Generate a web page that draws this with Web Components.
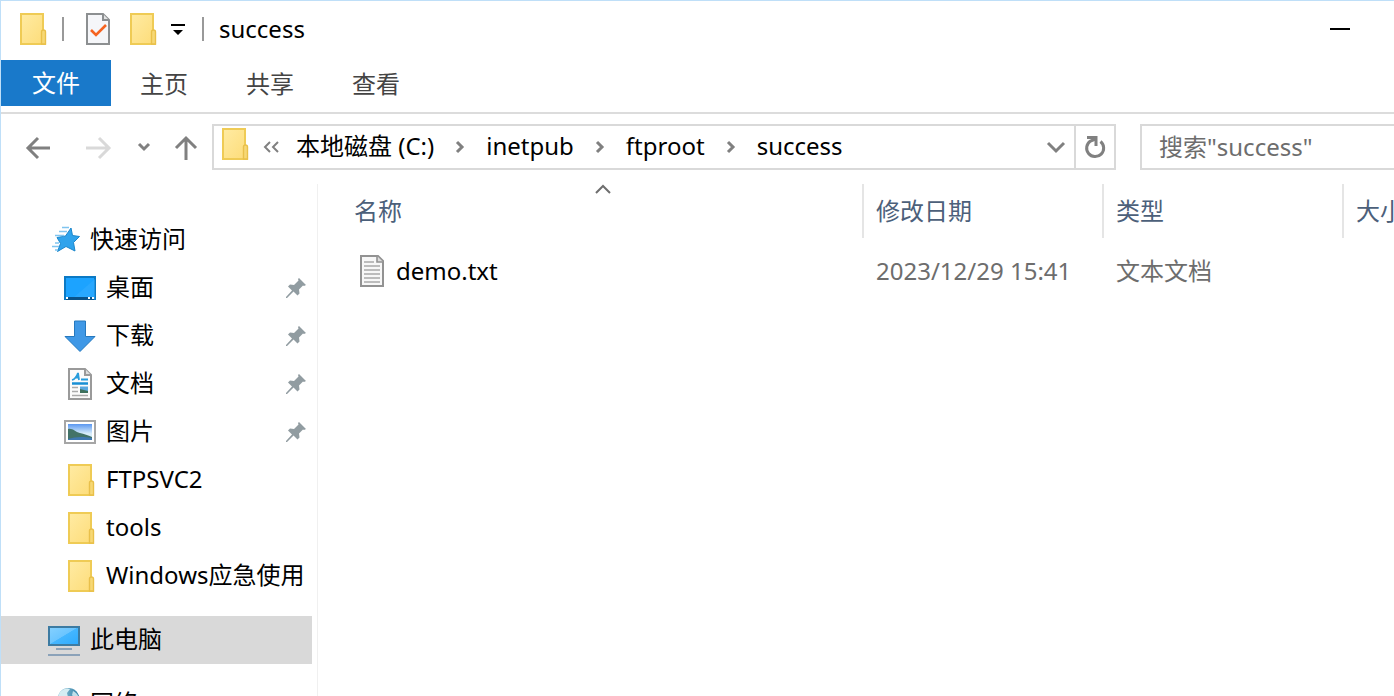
<!DOCTYPE html>
<html lang="zh-CN">
<head>
<meta charset="UTF-8">
<meta name="viewport" content="width=device-width, initial-scale=1.0">
<title>success</title>
<style>
    html, body {
        height: 100%;
        margin: 0;
    }
    body {
        overflow: hidden;
        background: #fff;
        color: #000;
        font: 24px/32px "Noto Sans", "Noto Sans CJK SC", sans-serif;
    }
</style>
</head>
<body>
<explorer-window>
    <title-bar slot="title">success</title-bar>
    <ribbon-tabs slot="ribbon">
        <ribbon-tab primary>文件</ribbon-tab>
        <ribbon-tab>主页</ribbon-tab>
        <ribbon-tab>共享</ribbon-tab>
        <ribbon-tab>查看</ribbon-tab>
    </ribbon-tabs>
    <nav-buttons slot="address"></nav-buttons>
    <address-bar slot="address">
        <path-crumb>本地磁盘 (C:)</path-crumb>
        <path-crumb>inetpub</path-crumb>
        <path-crumb>ftproot</path-crumb>
        <path-crumb>success</path-crumb>
    </address-bar>
    <search-box slot="address" folder="success"></search-box>
    <nav-tree slot="side">
        <tree-group>
            <tree-item icon="star" root>快速访问</tree-item>
            <tree-item icon="desktop" pinned>桌面</tree-item>
            <tree-item icon="download" pinned>下载</tree-item>
            <tree-item icon="document" pinned>文档</tree-item>
            <tree-item icon="picture" pinned>图片</tree-item>
            <tree-item icon="folder">FTPSVC2</tree-item>
            <tree-item icon="folder">tools</tree-item>
            <tree-item icon="folder">Windows应急使用</tree-item>
        </tree-group>
        <tree-group>
            <tree-item icon="computer" root selected>此电脑</tree-item>
        </tree-group>
        <tree-group>
            <tree-item icon="network" root>网络</tree-item>
        </tree-group>
    </nav-tree>
    <file-list></file-list>
</explorer-window>

<script>
/* Item icons, all drawn on a 32 x 32 grid */
const ICONS = {
    folder: `<defs><linearGradient id="f" x2="1" y2="1"><stop stop-color="#ffeba3"/><stop offset="1" stop-color="#fddc78"/></linearGradient></defs>
        <path d="M5 1h22v17l2 1v12H5z" fill="url(#f)" stroke="#efcb55" stroke-width="2"/>
        <path d="M25.500 31V19q0-2 2-2t2 2v12z" fill="#f7d875" stroke="#e9c04a" stroke-width="1.400"/>`,
    check: `<path d="M5 1h16l6 6v24H5z" fill="#f5f6f9" stroke="#8c8f91" stroke-width="2"/>
        <path d="M21 1v6h6" fill="#e2e3e4" stroke="#8c8f91" stroke-width="2"/>
        <path d="m9 17 5 5 10-10" fill="none" stroke="#f56320" stroke-width="2.600"/>`,
    star: `<path d="M23 4l1.500 7.500 7 1-6 6 1.500 8.500-9-4.500-8.500 5 3-8-3.500-6 8.500-1.500z" fill="#2fa3ec" stroke="#1a86cb"/>
        <path d="M14 3.500h7M11 7.500h8M7 11.500h9M7 19h4M4 22.500h7M7 26h3" stroke="#7fc4ef" stroke-width="1.500"/>`,
    desktop: `<path d="M1 5h30v22H1z" fill="#1ca3ff" stroke="#0b79c4" stroke-width="2"/>
        <path d="M9 26 31 7v20z" fill="#36adff" opacity=".5"/><path d="M2 25h28v3H2z" fill="#09538b"/>
        <path d="M2 26h2M24 26h2M28 26h2" stroke="#fff" stroke-width="2"/>`,
    download: `<path d="M10.500 1h11v15.500H31L16 31.500 1 16.500h9.500z" fill="#3f98e6" stroke="#2578be"/>`,
    document: `<path d="M5 1h16l6 6v24H5z" fill="#fbfbfb" stroke="#9a9a9a" stroke-width="2"/>
        <path d="M21 1v6h6" fill="#ddd" stroke="#9a9a9a" stroke-width="2"/>
        <path d="M8 12q4-1 6-7l1 7M11 9.500h4M17 11.500h7" fill="none" stroke="#279cdc" stroke-width="1.800"/>
        <path d="M8 15.500h16" stroke="#188fd4" stroke-width="2.500"/>
        <path d="M8 19.500h6M8 23.500h6M8 27.500h16" stroke="#aaa" stroke-width="1.500"/>
        <path d="M16 18.500h8V25h-8z" fill="#5aa8df"/><path d="m16 21 8 2v2h-8z" fill="#3e705c"/>`,
    picture: `<defs><linearGradient id="p" x2="0" y2="1"><stop stop-color="#5a97f0"/><stop offset=".6" stop-color="#d8edfb"/></linearGradient></defs>
        <path d="M1 5h30v22H1z" fill="#fff" stroke="#a6a6a6" stroke-width="2"/><path d="M4 8h24v16H4z" fill="url(#p)"/>
        <path d="M4 13c5-1 7 3 12 4 4 1 8 2 12 4v3H4z" fill="#437368"/><path d="M4 23c7-2 13-3 24-1v2H4z" fill="#3f78b2"/>`,
    computer: `<defs><linearGradient id="c" x2="1" y2="1"><stop stop-color="#86d1ff"/><stop offset=".48" stop-color="#6bc5ff"/><stop offset=".5" stop-color="#44b6ff"/><stop offset="1" stop-color="#2caaff"/></linearGradient></defs>
        <path d="M1 3h30v18H1z" fill="url(#c)" stroke="#3d7ba2" stroke-width="2"/>
        <path d="M8 25h16M0 31h32" stroke="#8ba2b9" stroke-width="2"/>`,
    network: `<defs><linearGradient id="n" x2="1"><stop stop-color="#9ccbdc"/><stop offset="1" stop-color="#2f7fa6"/></linearGradient></defs>
        <circle cx="20.500" cy="11" r="11" fill="url(#n)"/><path d="M12 4c4-4 8-4 10-3l-3 4 1 4-6 3-4-3z" fill="#d5edf3"/>
        <path d="M25 3c4 2 6 5 6 9l-5-2-2-3z" fill="#bfe0ea"/><path d="M4 14h16v12H4z" fill="#48b1ee" stroke="#3d7ba2"/>`,
    text: `<path d="M5 1h17l5 5v25H5z" fill="#f7f7f7" stroke="#929292" stroke-width="2"/>
        <path d="M21 1v6h6" fill="#ddd" stroke="#929292" stroke-width="1.600"/>
        <path d="M8 7h10M8 11h16M8 15h16M8 19h16M8 23h16M8 27h16" stroke="#a9a9a9" stroke-width="1.600"/>`
};

const icon = (name) => `<svg width="32" height="32" viewBox="0 0 32 32" aria-hidden="true">${ICONS[name]}</svg>`;

/* Base class: each component only returns its own styles and markup */
class ExplorerElement extends HTMLElement {
    constructor() {
        super();
        this.attachShadow({ mode: "open" });
    }

    getTemplate() {
        const template = document.createElement("template");
        template.innerHTML = `
            <style>
                :host { display: block; box-sizing: border-box; }
                * { box-sizing: border-box; }
                svg { display: block; flex: none; }
                button {
                    display: flex; align-items: center; justify-content: center;
                    margin: 0; padding: 0; border: 0; background: none;
                    color: inherit; font: inherit; white-space: nowrap;
                }
                .glyph { fill: none; stroke: #808080; stroke-width: 3; }
                ${this.getStyles()}
            </style>
            ${this.getMarkup()}
        `;
        return template;
    }

    connectedCallback() {
        this.shadowRoot.replaceChildren(this.getTemplate().content.cloneNode(true));
    }
}

class ExplorerWindow extends ExplorerElement {
    getStyles() {
        return `
            :host {
                display: flex; flex-direction: column; height: 100vh; overflow: hidden;
                border-top: 1px solid #bfdff8; border-left: 1px solid #bfdff8;
            }
            .address { display: flex; padding: 10px 0 14px; flex: none; }
            main { display: flex; flex: 1; min-height: 0; }
            ::slotted(file-list) { flex: 1; min-width: 0; }
        `;
    }

    getMarkup() {
        return `
            <slot name="title"></slot>
            <slot name="ribbon"></slot>
            <div class="address"><slot name="address"></slot></div>
            <main><slot name="side"></slot><slot></slot></main>
        `;
    }
}
customElements.define("explorer-window", ExplorerWindow);

class TitleBar extends ExplorerElement {
    getStyles() {
        return `
            :host { display: flex; align-items: center; flex: none; height: 59px; padding: 0 8px 3px 15px; }
            i { width: 2px; height: 24px; background: #999; }
            .tools { display: flex; align-items: center; gap: 12px; margin: 0 16px 0 18px; }
            .system { margin-right: 14px; }
            .name { margin-left: 15px; }
            .minimize { width: 92px; height: 56px; margin-left: auto; }
        `;
    }

    getMarkup() {
        return `
            <span class="system">${icon("folder")}</span>
            <i></i>
            <div class="tools">
                <button aria-label="属性">${icon("check")}</button>
                <button aria-label="新建文件夹">${icon("folder")}</button>
                <button aria-label="自定义快速访问工具栏">
                    <svg width="16" height="16" viewBox="0 0 16 16"><path d="M1 3h14v2H1zM3 9h10l-5 5z"/></svg>
                </button>
            </div>
            <i></i>
            <span class="name"><slot></slot></span>
            <button class="minimize" aria-label="最小化">
                <svg width="20" height="2" viewBox="0 0 20 2"><path d="M0 0h20v2H0z"/></svg>
            </button>
        `;
    }
}
customElements.define("title-bar", TitleBar);

class RibbonTabs extends ExplorerElement {
    getStyles() {
        return `:host { display: flex; flex: none; padding-bottom: 6px; border-bottom: 2px solid #dcdcdc; }`;
    }

    getMarkup() {
        return `<slot></slot>`;
    }
}
customElements.define("ribbon-tabs", RibbonTabs);

class RibbonTab extends ExplorerElement {
    getStyles() {
        return `
            button { height: 46px; padding: 2px 29px 0; color: #444; }
            :host([primary]) button { padding: 0 31px; background: #1979ca; color: #fff; }
        `;
    }

    getMarkup() {
        return `<button><slot></slot></button>`;
    }
}
customElements.define("ribbon-tab", RibbonTab);

class NavButtons extends ExplorerElement {
    getStyles() {
        return `
            :host { display: flex; align-items: center; flex: none; padding: 2px 14px 0 24px; }
            button + button { margin-left: 32px; }
            button + .recent { margin-left: 24px; }
            button + .up { margin-left: 23px; }
            .forward .glyph { stroke: #d9d9d9; }
        `;
    }

    getMarkup() {
        return `
            <button aria-label="后退"><svg width="28" height="24" viewBox="0 0 28 24"><path class="glyph" d="M25 12H3M13 2 3 12l10 10"/></svg></button>
            <button class="forward" aria-label="前进"><svg width="28" height="24" viewBox="0 0 28 24"><path class="glyph" d="M1 12h22M14 2l10 10-10 10"/></svg></button>
            <button class="recent" aria-label="最近浏览的位置"><svg width="14" height="12" viewBox="0 0 14 12"><path class="glyph" d="m2 2 5 5 5-5"/></svg></button>
            <button class="up" aria-label="上移"><svg width="24" height="26" viewBox="0 0 24 26"><path class="glyph" d="M12 25V3M2 13 12 3l10 10"/></svg></button>
        `;
    }
}
customElements.define("nav-buttons", NavButtons);

class AddressBar extends ExplorerElement {
    getStyles() {
        return `
            :host { display: flex; flex: 1; min-width: 0; height: 46px; border: 2px solid #d9d9d9; }
            .folder { padding: 2px 12px 0 4px; }
            .root { align-self: center; margin-right: 16px; }
            .root .glyph { stroke-width: 2; }
            .crumbs { display: flex; align-items: center; flex: 1; min-width: 0; overflow: hidden; }
            .drop { width: 36px; }
            .refresh { width: 40px; border-left: 2px solid #d9d9d9; }
        `;
    }

    getMarkup() {
        return `
            <div class="folder">${icon("folder")}</div>
            <svg class="root" width="18" height="14" viewBox="0 0 18 14" aria-hidden="true"><path class="glyph" d="M8 2 3 7l5 5M16 2l-5 5 5 5"/></svg>
            <div class="crumbs"><slot></slot></div>
            <button class="drop" aria-label="以前的位置"><svg width="20" height="14" viewBox="0 0 20 14"><path class="glyph" d="m2 3 8 8 8-8"/></svg></button>
            <button class="refresh" aria-label="刷新"><svg width="22" height="24" viewBox="0 0 22 24">
                <path class="glyph" d="M16.500 6.500A8.500 8.500 0 1 1 6.500 6l5-2"/><path class="glyph" d="M3 2.500h9V11"/></svg></button>
        `;
    }
}
customElements.define("address-bar", AddressBar);

class PathCrumb extends ExplorerElement {
    getStyles() {
        return `
            :host { display: flex; align-items: center; flex: none; padding-bottom: 2px; }
            :host(:last-child) svg { display: none; }
            a { color: inherit; text-decoration: none; white-space: nowrap; }
            svg { margin: 2px 21px 0; }
        `;
    }

    getMarkup() {
        return `
            <a href="#"><slot></slot></a>
            <svg width="10" height="14" viewBox="0 0 10 14" aria-hidden="true"><path class="glyph" d="m2 2 5 5-5 5"/></svg>
        `;
    }
}
customElements.define("path-crumb", PathCrumb);

class SearchBox extends ExplorerElement {
    getStyles() {
        return `
            :host { flex: none; width: 254px; margin-left: 24px; }
            input {
                display: block; width: 100%; height: 46px; margin: 0; padding: 0 17px 2px;
                border: 2px solid #d9d9d9; border-right: 0; border-radius: 0; background: #fff;
                font: inherit; outline: 0;
            }
            input::placeholder { color: #6d6d6d; opacity: 1; }
        `;
    }

    getMarkup() {
        const label = `搜索&quot;${this.getAttribute("folder")}&quot;`;
        return `<input type="search" aria-label="${label}" placeholder="${label}">`;
    }
}
customElements.define("search-box", SearchBox);

class NavTree extends ExplorerElement {
    getStyles() {
        return `:host { flex: none; width: 317px; padding: 32px 5px 0 0; border-right: 1px solid #f0f0f0; overflow: hidden; }`;
    }

    getMarkup() {
        return `<nav><slot></slot></nav>`;
    }
}
customElements.define("nav-tree", NavTree);

class TreeGroup extends ExplorerElement {
    getStyles() {
        return `:host { margin-bottom: 16px; }`;
    }

    getMarkup() {
        return `<slot></slot>`;
    }
}
customElements.define("tree-group", TreeGroup);

class TreeItem extends ExplorerElement {
    getStyles() {
        return `
            a {
                display: flex; align-items: center; gap: 10px; height: 48px; padding: 0 6px 0 63px;
                color: inherit; text-decoration: none; white-space: nowrap;
            }
            :host([root]) a { padding-left: 47px; }
            :host([selected]) a { background: #d9d9d9; }
            span { padding-bottom: 2px; }
            .pin { margin-left: auto; }
        `;
    }

    getMarkup() {
        const pin = `
            <svg class="pin" width="20" height="20" viewBox="0 0 20 20" aria-hidden="true">
                <path d="m13 0 7 7-2 1-1-.5-4 4 .5 4-2 2-4-4L1 20H0v-1l6-6.500-4-4 2-2 4 .5 4.500-4.500L12 1z" fill="#919ca1"/>
            </svg>`;
        return `
            <a href="#">
                ${icon(this.getAttribute("icon"))}
                <span><slot></slot></span>
                ${this.hasAttribute("pinned") ? pin : ""}
            </a>
        `;
    }
}
customElements.define("tree-item", TreeItem);

class FileList extends ExplorerElement {
    getStyles() {
        return `
            :host { overflow: hidden; }
            table { width: 1266px; table-layout: fixed; border-collapse: separate; border-spacing: 0; }
            th, td { padding: 0 12px; text-align: left; font-weight: 400; white-space: nowrap; }
            th { position: relative; height: 54px; border-right: 2px solid #e5e5e5; color: #4c607a; }
            td { height: 48px; color: #6d6d6d; }
            th:first-child { padding-left: 36px; }
            td:first-child { padding-left: 38px; color: #000; }
            tbody::before { content: ""; display: block; height: 9px; }
            .file { display: flex; align-items: center; gap: 8px; }
            .sort { position: absolute; top: 0; left: 50%; margin-left: 4px; }
            .name { width: 546px; }
            .detail { width: 240px; }
        `;
    }

    getMarkup() {
        return `
            <table>
                <colgroup><col class="name"><col class="detail" span="3"></colgroup>
                <thead>
                    <tr>
                        <th aria-sort="ascending">名称
                            <svg class="sort" width="18" height="10" viewBox="0 0 18 10" aria-hidden="true"><path d="m2 9 7-7 7 7" fill="none" stroke="#6e6e6e" stroke-width="2"/></svg>
                        </th>
                        <th>修改日期</th>
                        <th>类型</th>
                        <th>大小</th>
                    </tr>
                </thead>
                <tbody>
                    <tr>
                        <td><div class="file">${icon("text")}<span>demo.txt</span></div></td>
                        <td>2023/12/29 15:41</td>
                        <td>文本文档</td>
                        <td></td>
                    </tr>
                </tbody>
            </table>
        `;
    }
}
customElements.define("file-list", FileList);
</script>
</body>
</html>
